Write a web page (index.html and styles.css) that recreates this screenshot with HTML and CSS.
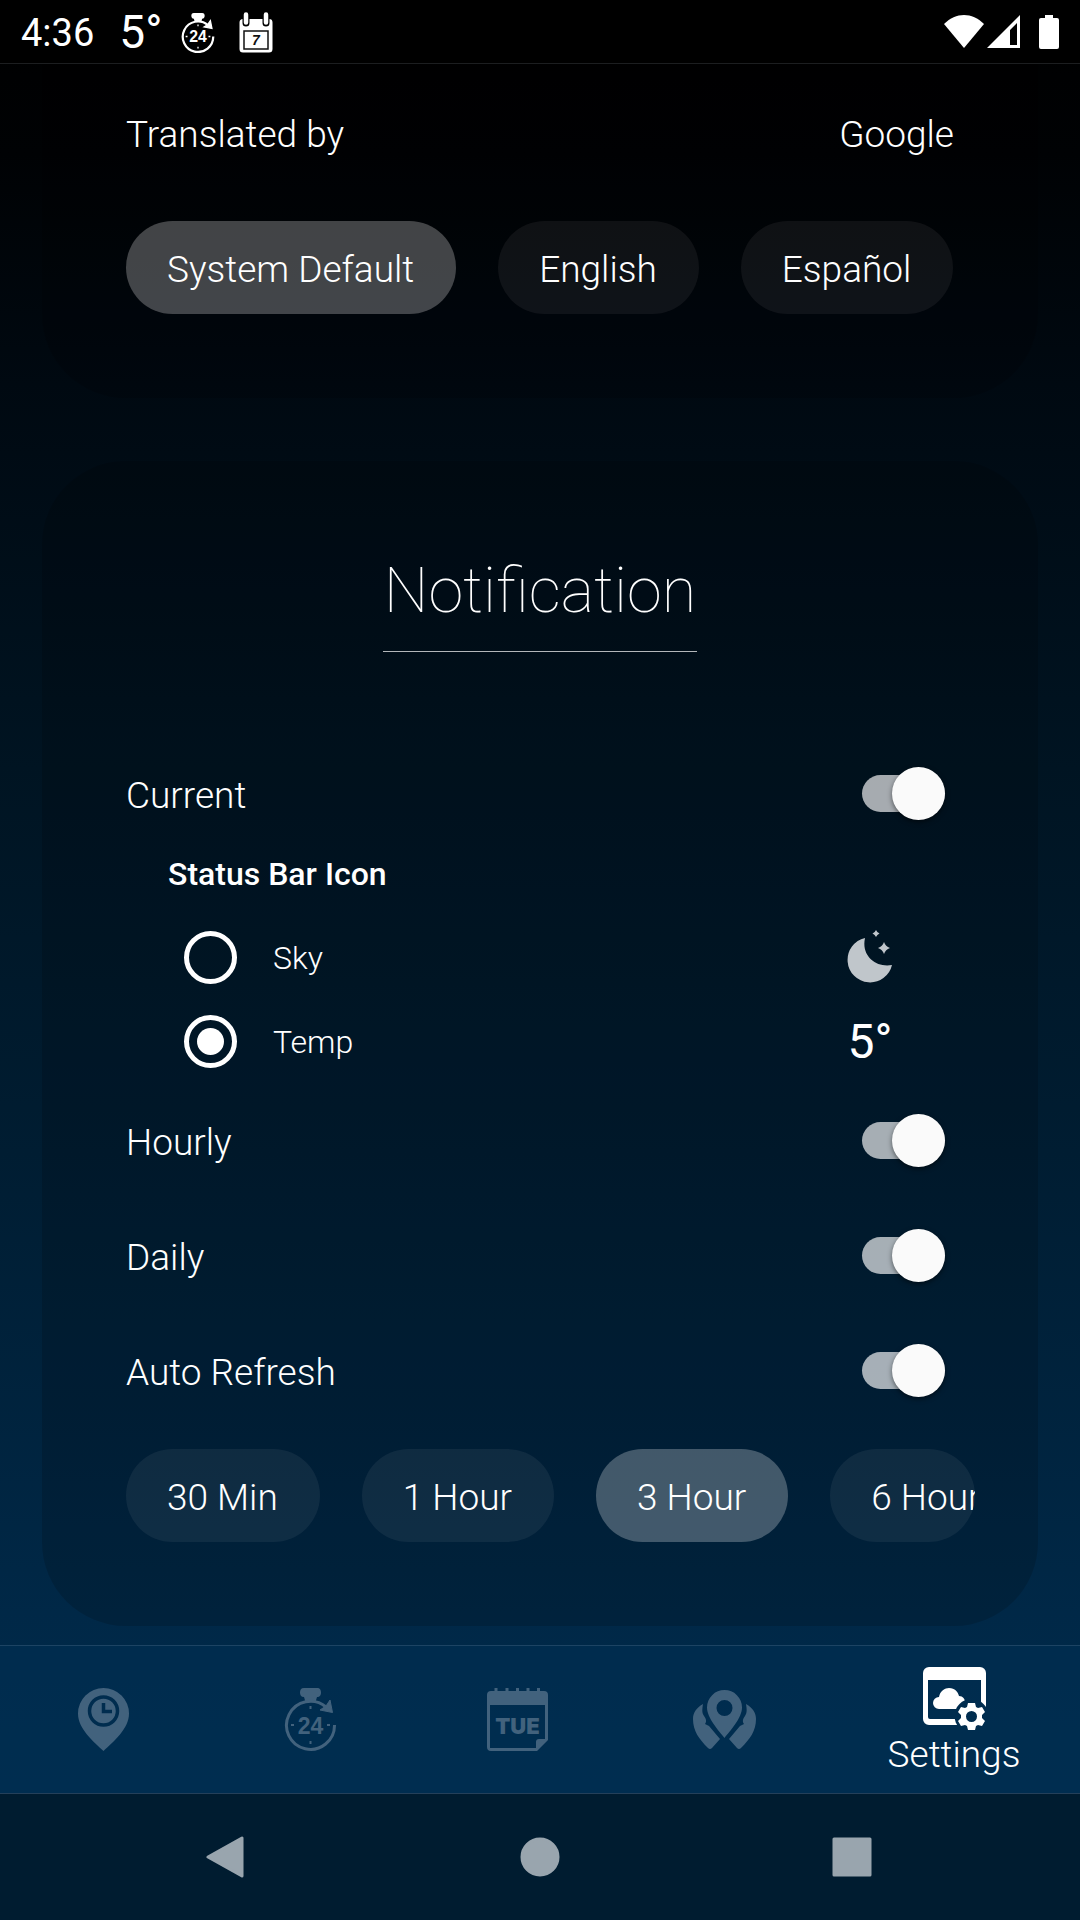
FILE: index.html
```html
<!DOCTYPE html>
<html lang="en">
<head>
  <meta charset="UTF-8">
  <meta name="viewport" content="width=device-width, initial-scale=1">
  <title>Settings</title>
  <link rel="stylesheet" href="styles.css">
</head>
<body>
  <header class="status-bar">
    <div class="status-left">
      <span class="clock">4:36</span>
      <span class="status-temp">5°</span>
      <svg class="status-hourly" viewBox="0 0 63 63">
        <path d="M25 0h13c3 0 4 2 4 4.500s-1 4.500-4 4.500l-1.500 5h-10l-1.500-5c-3 0-4-2-4-4.500s1-4.500 4-4.500z" fill="currentColor"/>
        <path d="M55.500 37a24 24 0 1 1-8.500-18" fill="none" stroke="currentColor" stroke-width="3.500"/>
        <path d="M51 12l2.500 12.500-12.500-2.500 6-4z" fill="currentColor" stroke="currentColor" stroke-width="2"/>
        <path d="M31.500 18v3M31.500 53v3M12 37h3M48 37h3" stroke="currentColor" stroke-width="2"/>
        <text x="31.500" y="46" class="icon-text" font-size="25">24</text>
      </svg>
      <svg class="status-daily" viewBox="0 0 34 41">
        <path d="M4 7h26a3.500 3.500 0 0 1 3.500 3.500V37a3.500 3.500 0 0 1-3.500 3.500H4A3.500 3.500 0 0 1 .5 37V10.500A3.500 3.500 0 0 1 4 7z" fill="#fff"/>
        <path d="M7 1v10M27 1v10" stroke="#000" stroke-width="7" stroke-linecap="round"/>
        <path d="M7 2.500v8M27 2.500v8" stroke="#fff" stroke-width="4.500" stroke-linecap="round"/>
        <path d="M5 19h24v18H5z" fill="#fff" stroke="#111" stroke-width="1.500"/>
        <text x="17" y="33" class="icon-text slanted" font-size="14">7</text>
      </svg>
    </div>
    <div class="status-right">
      <svg class="wifi" viewBox="0 0 40 33"><path d="M0 9C12-3 28-3 40 9L20 33z" fill="#fff"/></svg>
      <svg class="signal" viewBox="0 0 33 33"><path d="M33 0v33H0zM30 8l-7 7v15h7z" fill="#fff" fill-rule="evenodd"/></svg>
      <svg class="battery" viewBox="0 0 20 34"><path d="M6 0h8v3h4a2 2 0 0 1 2 2v27a2 2 0 0 1-2 2H2a2 2 0 0 1-2-2V5a2 2 0 0 1 2-2h4z" fill="#fff"/></svg>
    </div>
  </header>

  <main>
    <section class="card language">
      <div class="translated">
        <span>Translated by</span>
        <span>Google</span>
      </div>
      <div class="chips">
        <button type="button" class="chip selected">System Default</button>
        <button type="button" class="chip">English</button>
        <button type="button" class="chip">Español</button>
      </div>
    </section>

    <section class="card notification">
      <h2>Notification</h2>

      <div class="row">
        <label for="current">Current</label>
        <input type="checkbox" role="switch" class="switch" id="current" checked>
      </div>

      <fieldset>
        <legend>Status Bar Icon</legend>
        <div class="radio-row">
          <input type="radio" name="statusIcon" id="sky">
          <label for="sky">Sky</label>
          <span class="preview">
            <svg class="moon" viewBox="0 0 46 54">
              <path d="M18 8A22.500 22.500 0 1 0 45 35C29 38 14 26 18 8z"/>
              <path d="M37 12q1.500 4.500 6 6-4.500 1.500-6 6-1.500-4.500-6-6 4.500-1.500 6-6zM29 0q1 2.500 3.500 3.500-2.500 1-3.500 3.500-1-2.500-3.500-3.500 2.500-1 3.500-3.500z"/>
            </svg>
          </span>
        </div>
        <div class="radio-row">
          <input type="radio" name="statusIcon" id="temp" checked>
          <label for="temp">Temp</label>
          <span class="preview">5°</span>
        </div>
      </fieldset>

      <div class="row">
        <label for="hourly">Hourly</label>
        <input type="checkbox" role="switch" class="switch" id="hourly" checked>
      </div>
      <div class="row">
        <label for="daily">Daily</label>
        <input type="checkbox" role="switch" class="switch" id="daily" checked>
      </div>
      <div class="row">
        <label for="refresh">Auto Refresh</label>
        <input type="checkbox" role="switch" class="switch" id="refresh" checked>
      </div>

      <div class="chips intervals">
        <button type="button" class="chip">30 Min</button>
        <button type="button" class="chip">1 Hour</button>
        <button type="button" class="chip selected">3 Hour</button>
        <button type="button" class="chip cut">6 Hour</button>
      </div>
    </section>
  </main>

  <nav class="tabs">
    <a href="#now" aria-label="Now">
      <svg viewBox="0 0 63 63">
        <mask id="pin-mask">
          <rect width="63" height="63" fill="#fff"/>
          <circle cx="31.500" cy="23" r="14" fill="none" stroke="#000" stroke-width="3.500"/>
          <path d="M31.500 15v8.500h8.500" fill="none" stroke="#000" stroke-width="3.500"/>
        </mask>
        <path d="M31.500 63C22 54 6 41 6 25.500a25.500 25.500 0 0 1 51 0C57 41 41 54 31.500 63z" fill="currentColor" mask="url(#pin-mask)"/>
      </svg>
    </a>
    <a href="#hourly-tab" aria-label="Hourly forecast">
      <svg viewBox="0 0 63 63">
        <path d="M25 0h13c3 0 4 2 4 4.500s-1 4.500-4 4.500l-1.500 5h-10l-1.500-5c-3 0-4-2-4-4.500s1-4.500 4-4.500z" fill="currentColor"/>
        <path d="M55.500 37a24 24 0 1 1-8.500-18" fill="none" stroke="currentColor" stroke-width="3"/>
        <path d="M51 12l2.500 12.500-12.500-2.500 6-4z" fill="currentColor" stroke="currentColor" stroke-width="1"/>
        <path d="M31.500 18v3M31.500 53v3M12 37h3M48 37h3" stroke="currentColor" stroke-width="2"/>
        <text x="31.500" y="46" class="icon-text" font-size="23">24</text>
      </svg>
    </a>
    <a href="#daily-tab" aria-label="Daily forecast">
      <svg viewBox="0 0 63 63">
        <path d="M5 3h53a4 4 0 0 1 4 4v45L51 63H5a4 4 0 0 1-4-4V7a4 4 0 0 1 4-4zM4 17v43h46v-6a3 3 0 0 1 3-3h6V17z" fill="currentColor" fill-rule="evenodd"/>
        <path d="M10 0v4M21 0v4M31.500 0v4M42 0v4M52.500 0v4" stroke="currentColor" stroke-width="3"/>
        <text x="31.500" y="46" class="icon-text heavy" font-size="22">TUE</text>
      </svg>
    </a>
    <a href="#places" aria-label="Places">
      <svg viewBox="0 0 63 63" fill="currentColor">
        <path d="M31.500 50C26 43 14 30 14 19.500a17.500 17.500 0 0 1 35 0C49 30 37 43 31.500 50zM31.500 12a8 8 0 1 0 0 16 8 8 0 0 0 0-16z" fill-rule="evenodd"/>
        <path d="M10 16C3 20 0 25 0 31c0 12 6 20 15 29q2 2 4 0l8-9-11-13-4-2c2-3 1-5-1-8-2-3-2-6-1-12z"/>
        <path d="M53 16c7 4 10 9 10 15 0 12-6 20-15 29q-2 2-4 0l-8-9 11-13 4-2c-2-3-1-5 1-8 2-3 2-6 1-12z"/>
      </svg>
    </a>
    <a href="#settings" class="active">
      <svg viewBox="0 0 63 63" fill="currentColor">
        <mask id="gear-mask">
          <rect width="63" height="63" fill="#fff"/>
          <circle cx="48.500" cy="49" r="17" fill="#000"/>
        </mask>
        <g mask="url(#gear-mask)">
          <path d="M6 0h51a6 6 0 0 1 6 6v46a6 6 0 0 1-6 6H6a6 6 0 0 1-6-6V6a6 6 0 0 1 6-6zM5 13v37a2 2 0 0 0 2 2h49a2 2 0 0 0 2-2V13z" fill-rule="evenodd"/>
          <path d="M16 42a6 6 0 0 1 0-12c1-6 6-9 10-9 6 0 9 4 10 8 4 0 6 3 6 6.500 0 4-3 6.500-6 6.500z"/>
        </g>
        <path d="M45 36h7l1 4 2 1 4-1 3 5-3 3v3l3 3-3 5-4-1-2 1-1 4h-7l-1-4-2-1-4 1-3-5 3-3v-3l-3-3 3-5 4 1 2-1zM48.500 44a5.500 5.500 0 1 0 0 11 5.500 5.500 0 0 0 0-11z" fill-rule="evenodd"/>
      </svg>
      <span>Settings</span>
    </a>
  </nav>

  <footer class="system-nav">
    <button type="button" aria-label="Back">
      <svg viewBox="0 0 42 42"><path d="M36 2v38L2 21z"/></svg>
    </button>
    <button type="button" aria-label="Home">
      <svg viewBox="0 0 42 42"><circle cx="21" cy="21" r="18"/></svg>
    </button>
    <button type="button" aria-label="Recent apps">
      <svg viewBox="0 0 42 42"><path d="M2 3h36v36H2z"/></svg>
    </button>
  </footer>
</body>
</html>
```
FILE: styles.css
```css
* {
  box-sizing: border-box;
}

body {
  margin: 0;
  min-height: 100vh;
  display: flex;
  flex-direction: column;
  background: linear-gradient(#000000 0, #000204 8%, #000911 20%, #001422 40%, #001d32 60%, #002847 84%, #002d50 100%);
  color: #fff;
  font-family: Roboto, sans-serif;
  font-size: 37px;
  font-weight: 300;
  line-height: 43px;
}

svg {
  display: block;
}

button {
  font: inherit;
  color: inherit;
  border: none;
  cursor: pointer;
}

a {
  color: inherit;
  text-decoration: none;
}

.icon-text {
  font-family: "Liberation Sans", sans-serif;
  font-weight: bold;
  text-anchor: middle;
  fill: currentColor;
}

.slanted {
  font-style: italic;
  fill: #111;
}

.heavy {
  font-family: Inter, sans-serif;
  font-weight: 900;
}

/* status bar */
.status-bar {
  display: flex;
  justify-content: space-between;
  align-items: center;
  height: 64px;
  padding: 2px 21px 0;
  background: #000;
  border-bottom: 1px solid #1c1e20;
}

.status-left,
.status-right {
  display: flex;
  align-items: center;
}

.clock {
  padding-top: 1px;
  font-size: 38px;
  font-weight: 400;
}

.status-temp {
  margin-left: 25px;
  font-size: 46px;
  font-weight: 400;
}

.status-hourly {
  width: 40px;
  height: 40px;
  margin-left: 16px;
}

.status-daily {
  width: 34px;
  height: 41px;
  margin-left: 21px;
}

.wifi {
  width: 40px;
  height: 33px;
}

.signal {
  width: 33px;
  height: 33px;
  margin-left: 3px;
}

.battery {
  width: 20px;
  height: 34px;
  margin-left: 19px;
}

.wifi,
.signal,
.battery {
  margin-bottom: 2px;
}

/* cards */
main {
  flex: 1;
}

.card {
  margin: 0 42px;
  padding: 84px;
  background: rgba(0, 0, 0, 0.15);
  border-radius: 84px;
}

.language {
  padding-top: 49px;
  border-top-left-radius: 0;
  border-top-right-radius: 0;
}

.translated {
  display: flex;
  justify-content: space-between;
  margin-bottom: 65px;
}

.chips {
  display: flex;
  gap: 42px;
}

.chip {
  flex: none;
  padding: 27px 42px 23px 41px;
  border-radius: 47px;
  background: rgba(255, 255, 255, 0.06);
  white-space: nowrap;
}

.chip.selected {
  background: rgba(255, 255, 255, 0.26);
}

.notification {
  margin-top: 63px;
  margin-bottom: 18px;
  padding-top: 92px;
}

h2 {
  width: fit-content;
  margin: 0 auto 84px;
  padding: 1px 1px 23px;
  border-bottom: 1px solid rgba(255, 255, 255, 0.7);
  font-size: 63px;
  font-weight: 100;
  line-height: 74px;
}

.row {
  display: flex;
  justify-content: space-between;
  align-items: center;
  height: 115px;
  padding-right: 9px;
}

.row label {
  padding-top: 4px;
}

.switch {
  appearance: none;
  position: relative;
  width: 83px;
  height: 37px;
  margin: 0;
  border-radius: 19px;
  background: rgba(255, 255, 255, 0.65);
}

.switch::before {
  content: "";
  position: absolute;
  top: -8px;
  left: 0;
  width: 53px;
  height: 53px;
  border-radius: 50%;
  background: #fafafa;
  box-shadow: 0 2px 5px rgba(0, 0, 0, 0.5);
}

.switch:checked::before {
  left: auto;
  right: 0;
}

fieldset {
  margin: 0;
  padding: 4px 42px 0;
  border: none;
  font-size: 32px;
  line-height: 38px;
}

legend {
  float: left;
  width: 100%;
  padding: 0;
  margin-bottom: 22px;
  font-weight: 500;
}

.radio-row {
  clear: both;
  display: flex;
  align-items: center;
  height: 84px;
  padding-left: 16px;
}

.radio-row input {
  appearance: none;
  width: 53px;
  height: 53px;
  margin: 0 36px 0 0;
  padding: 8px;
  border: 5px solid #fff;
  border-radius: 50%;
}

.radio-row input:checked {
  background: #fff content-box;
}

.radio-row label {
  flex: 1;
  padding-top: 2px;
}

.preview {
  display: flex;
  justify-content: center;
  width: 84px;
  padding-top: 2px;
  font-size: 48px;
  font-weight: 400;
}

.moon {
  width: 46px;
  height: 54px;
  margin-top: -3px;
  fill: #c0c6cb;
}

.intervals {
  margin-top: 21px;
  margin-right: -21px;
}

/* last chip runs past the edge of the list */
.cut {
  flex: 1;
  min-width: 0;
  padding-right: 0;
  overflow: hidden;
  text-align: left;
}

/* tabs */
.tabs {
  display: flex;
  height: 148px;
  background: rgba(0, 48, 84, 0.5);
  border-top: 1px solid #1d4463;
}

.tabs a {
  flex: 1;
  display: flex;
  justify-content: center;
  padding-top: 42px;
  color: #42627d;
}

.tabs svg {
  width: 63px;
  height: 63px;
}

.tabs .active {
  flex: 0 0 252px;
  flex-direction: column;
  justify-content: flex-start;
  align-items: center;
  gap: 3px;
  padding-top: 21px;
  color: #fff;
}

/* system navigation */
.system-nav {
  display: flex;
  height: 127px;
  padding: 0 70px;
  background: #001c30;
  border-top: 1px solid #24405a;
}

.system-nav button {
  flex: 1;
  display: flex;
  justify-content: center;
  align-items: center;
  background: none;
}

.system-nav svg {
  width: 42px;
  height: 42px;
  fill: #99a5ae;
  stroke: #99a5ae;
  stroke-width: 3px;
  stroke-linejoin: round;
}
```
